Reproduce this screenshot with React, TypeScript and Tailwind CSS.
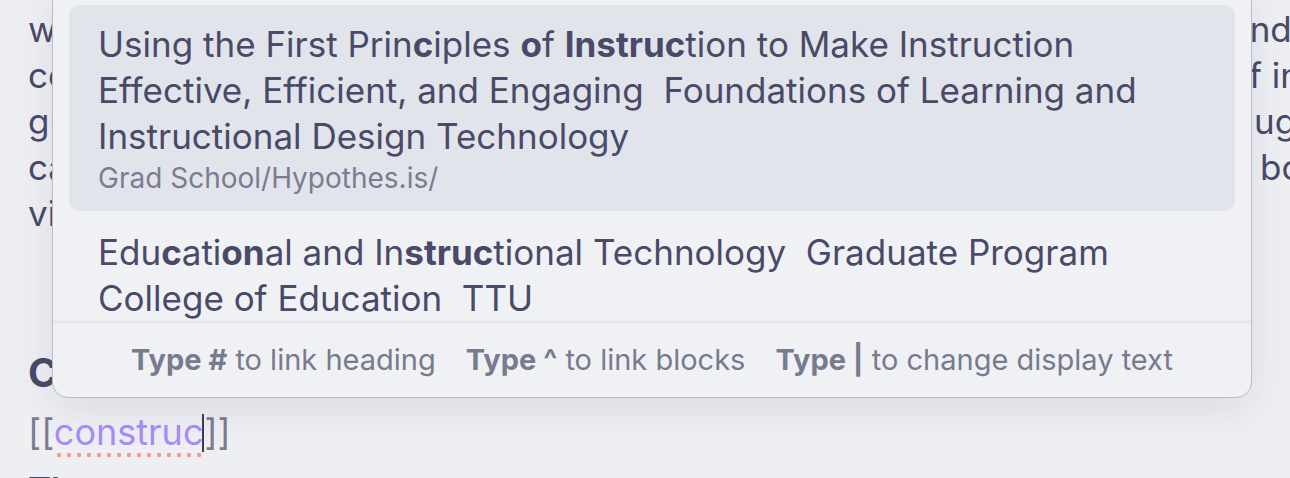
import React from 'react';

const bodyLines = [
  { left: 'which', right: 'and', pad: 'ml-[2px]' },
  { left: 'content', right: 'of in', pad: 'ml-[0px]' },
  { left: 'guided', right: 'ug', pad: 'ml-[26px]' },
  { left: 'can', right: 'bo', pad: 'ml-[32px]' },
  { left: 'vital', right: '', pad: '' },
];

type Part = { t: string; b?: boolean };

const Match: React.FC<{ parts: Part[] }> = ({ parts }) => (
  <>
    {parts.map((p, i) =>
      p.b ? (
        <span key={i} className="font-bold">
          {p.t}
        </span>
      ) : (
        <span key={i}>{p.t}</span>
      ),
    )}
  </>
);

const first: Part[] = [
  { t: 'Using the First Prin' },
  { t: 'c', b: true },
  { t: 'iples ' },
  { t: 'o', b: true },
  { t: 'f ' },
  { t: 'Instruc', b: true },
  { t: 'tion to Make Instruction Effective, Efficient, and Engaging\u00a0\u00a0Foundations of Learning and Instructional Design Technology' },
];

const second: Part[] = [
  { t: 'Edu' },
  { t: 'c', b: true },
  { t: 'ati' },
  { t: 'on', b: true },
  { t: 'al and In' },
  { t: 'struc', b: true },
  { t: 'tional Technology\u00a0\u00a0Graduate Program College of Education\u00a0\u00a0TTU' },
];

const Hint: React.FC<{ k: string; text: string }> = ({ k, text }) => (
  <span className="whitespace-nowrap">
    <span className="font-bold">{k}</span> {text}
  </span>
);

const App: React.FC = () => {
  return (
    <div
      className="relative w-[1290px] h-[478px] overflow-hidden bg-[#eeeff3] text-[#494a68]"
      style={{ fontFamily: 'Inter, "Noto Sans", sans-serif' }}
    >
      {/* editor text behind the popover */}
      <div className="pl-[28px] pt-[6px] text-[35px] leading-[46px]">
        {bodyLines.map((l, i) => (
          <div key={i} className="grid grid-cols-[1200px_1fr] whitespace-nowrap">
            <span>{l.left}</span>
            <span className={l.pad}>{l.right}</span>
          </div>
        ))}
        <div className="mt-[111px] text-[40px] leading-[52px] font-bold">Construction</div>
        <div className="mt-[10px] whitespace-nowrap text-[36px]">
          <span className="text-[#7a7c90]">[[</span>
          <span className="relative text-[#a98cf8]">
            construc
            <span className="absolute left-0 right-0 bottom-[-4px] h-[6px] bg-[radial-gradient(circle,#f59a90_2px,transparent_2.5px)] bg-[length:10px_6px]" />
          </span>
          <span className="inline-block w-[2px] h-[38px] bg-[#3d3e55] align-[-7px] -ml-[1px]" />
          <span className="text-[#7a7c90]">]]</span>
        </div>
        <div className="mt-[12px] font-semibold">The</div>
      </div>

      {/* link suggestion popover */}
      <div className="absolute left-[52px] top-[-12px] w-[1200px] rounded-b-[16px] border border-[#b9bccb] bg-[#f0f1f5] shadow-[0_12px_40px_rgba(60,60,90,0.10)]">
        <div className="h-[332px] overflow-hidden px-[16px] pt-[16px]">
          <div className="rounded-[10px] bg-[#e2e4ec] pl-[29px] pr-[20px] pt-[16px] pb-[14px]">
            <div className="text-[35px] leading-[46px]">
              <Match parts={first} />
            </div>
            <div className="text-[28px] leading-[38px] text-[#7b7c91]">Grad School/Hypothes.is/</div>
          </div>
          <div className="pl-[29px] pr-[20px] pt-[18px]">
            <div className="text-[35px] leading-[46px]">
              <Match parts={second} />
            </div>
            <div className="text-[28px] leading-[38px] text-[#7b7c91]">Grad School/</div>
          </div>
        </div>
        <div className="flex justify-center gap-[30px] border-t-2 border-[#e4e5eb] pt-[19px] pb-[19px] text-[29px] leading-[36px] text-[#787a8e]">
          <Hint k="Type #" text="to link heading" />
          <Hint k="Type ^" text="to link blocks" />
          <Hint k="Type |" text="to change display text" />
        </div>
      </div>
    </div>
  );
};

export default App;
